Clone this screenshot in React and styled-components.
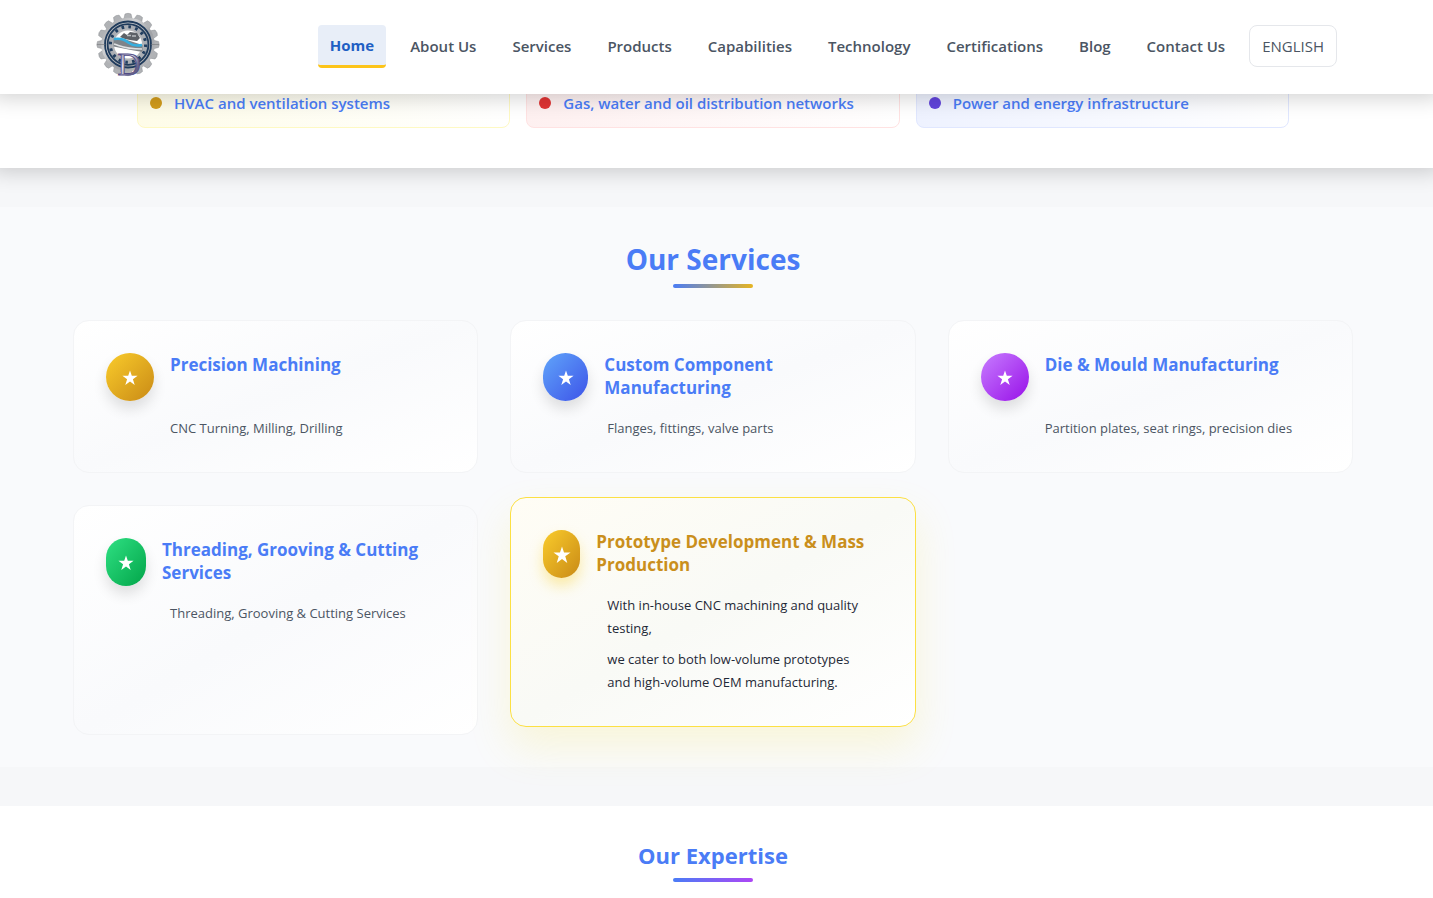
import React from 'react';
import styled, { createGlobalStyle, css } from 'styled-components';

const palette = {
  blue: '#4a7cf6',
  navActive: '#1f5fc4',
  slate: '#4b5563',
  gold: '#ca8f1c',
  line: '#e5e7eb',
};

const GlobalStyle = createGlobalStyle`
  * {
    box-sizing: border-box;
  }

  body {
    margin: 0;
    overflow-x: hidden;
    background: #f6f7f9;
    color: #1f2937;
    font-family: 'Segoe UI', 'Open Sans', 'Noto Sans', sans-serif;
  }

  /* the page scrolls without a visible bar */
  html {
    scrollbar-width: none;
  }

  h2, h3, p, ul {
    margin: 0;
    padding: 0;
  }
`;

const HeaderBlock = styled.header`
  position: sticky;
  top: 0;
  z-index: 10;
  display: flex;
  align-items: center;
  justify-content: space-between;
  height: 94px;
  padding: 0 96px 2px;
  background: #fff;
  box-shadow: 0 -4px 20px 8px rgba(0, 0, 0, 0.18);
`;

const LogoLink = styled.a`
  display: block;
  height: 64px;

  svg {
    overflow: visible;
  }
`;

const Nav = styled.nav`
  display: flex;
  align-items: center;
  gap: 12px;
`;

const NavLink = styled.a`
  padding: 0 12px;
  border-radius: 4px;
  color: ${palette.slate};
  font-size: 15px;
  font-weight: 600;
  line-height: 42px;
  text-decoration: none;
  white-space: nowrap;

  ${props =>
    props.$active &&
    css`
      background: #e8eef8;
      border-bottom: 3px solid #fcc419;
      color: ${palette.navActive};
      font-weight: 700;
      line-height: 40px;
    `}
`;

const LanguageButton = styled.button`
  height: 42px;
  padding: 0 12px;
  border: 1px solid ${palette.line};
  border-radius: 8px;
  background: #fff;
  color: ${palette.slate};
  font-family: inherit;
  font-size: 15px;
`;

const IndustriesBlock = styled.section`
  position: relative;
  margin-top: -17px;
  padding: 0 7px 40px 0;
  background: #fff;
  box-shadow: 0 -4px 20px 8px rgba(0, 0, 0, 0.18);
`;

const IndustryList = styled.ul`
  display: grid;
  grid-template-columns: repeat(3, 1fr);
  gap: 16px;
  max-width: 1152px;
  margin: 0 auto;
  list-style: none;
`;

const IndustryItem = styled.li`
  display: flex;
  align-items: center;
  gap: 12px;
  height: 51px;
  padding: 0 12px;
  border: 1px solid ${props => props.$border};
  border-radius: 8px;
  background: linear-gradient(to right, ${props => props.$tint}, #fff);
  color: ${palette.blue};
  font-size: 15px;
  font-weight: 600;
`;

const Dot = styled.span`
  width: 12px;
  height: 12px;
  border-radius: 50%;
  background: ${props => props.$color};
`;

const ServicesBlock = styled.section`
  margin-top: 39px;
  padding: 32px 39px 32px 32px;
  background: #f9fafc;
`;

const SectionTitle = styled.h2`
  color: ${palette.blue};
  font-size: ${props => (props.$small ? '22px' : '28px')};
  font-weight: 700;
  line-height: ${props => (props.$small ? '34px' : '40px')};
  text-align: center;

  &::after {
    content: '';
    display: block;
    width: 80px;
    height: 4px;
    margin: ${props => (props.$small ? '6px' : '5px')} auto 0;
    border-radius: 2px;
    background: linear-gradient(to right, ${palette.blue}, ${props => props.$accent});
  }
`;

const CardGrid = styled.div`
  display: grid;
  grid-template-columns: repeat(3, 1fr);
  gap: 32px;
  max-width: 1280px;
  margin: 32px auto 0;
`;

const Card = styled.article`
  padding: 32px;
  border: 1px solid #f3f4f6;
  border-radius: 16px;
  background: linear-gradient(to bottom right, #fff, #f9fafc, #fff);

  ${props =>
    props.$featured &&
    css`
      border-color: #fce043;
      background: linear-gradient(to bottom right, #fffdf5, #f9faf6, #fff);
      box-shadow: 0 20px 40px rgba(250, 225, 60, 0.18);
      transform: translateY(-8px);
    `}
`;

const CardHead = styled.div`
  display: flex;
  gap: 16px;
  height: 48px;
  margin-bottom: 16px;
`;

const IconBadge = styled.span`
  display: flex;
  align-items: center;
  justify-content: center;
  flex: none;
  width: ${props => props.$width}px;
  height: 48px;
  padding-top: 2px;
  border-radius: 24px;
  background: linear-gradient(to bottom right, ${props => props.$from}, ${props => props.$to});
  box-shadow: 0 8px 14px ${props => (props.$featured ? 'rgba(250, 204, 21, 0.35)' : 'rgba(0, 0, 0, 0.12)')};
`;

const CardTitle = styled.h3`
  color: ${props => (props.$featured ? palette.gold : palette.blue)};
  font-size: 17px;
  font-weight: 700;
  line-height: 23px;
`;

const CardText = styled.p`
  margin-left: 64px;
  padding-right: 12px;
  color: ${props => (props.$featured ? '#1f2937' : palette.slate)};
  font-size: 13px;
  line-height: 23px;

  & + & {
    margin-top: 8px;
  }
`;

const ExpertiseBlock = styled.section`
  margin-top: 39px;
  padding: 32px 7px 32px 0;
  background: #fff;
`;

const navItems = [
  'Home',
  'About Us',
  'Services',
  'Products',
  'Capabilities',
  'Technology',
  'Certifications',
  'Blog',
  'Contact Us',
];

const industries = [
  { label: 'HVAC and ventilation systems', dot: '#d29c1c', tint: '#fefce8', border: '#fef9c3' },
  { label: 'Gas, water and oil distribution networks', dot: '#e03535', tint: '#fef0f0', border: '#ffe2e2' },
  { label: 'Power and energy infrastructure', dot: '#6144dc', tint: '#eef2ff', border: '#e0e7ff' },
];

const services = [
  { title: 'Precision Machining', text: ['CNC Turning, Milling, Drilling'], from: '#facc2b', to: '#c98a16', width: 48 },
  { title: 'Custom Component Manufacturing', text: ['Flanges, fittings, valve parts'], from: '#60a5fa', to: '#3d53e8', width: 45 },
  { title: 'Die & Mould Manufacturing', text: ['Partition plates, seat rings, precision dies'], from: '#c77dff', to: '#9810e8', width: 48 },
  { title: 'Threading, Grooving & Cutting Services', text: ['Threading, Grooving & Cutting Services'], from: '#2fe083', to: '#02a549', width: 40 },
  {
    title: 'Prototype Development & Mass Production',
    text: [
      'With in-house CNC machining and quality testing,',
      'we cater to both low-volume prototypes and high-volume OEM manufacturing.',
    ],
    from: '#facc2b',
    to: '#c98a16',
    width: 37,
    featured: true,
  },
];

const teeth = Array.from({ length: 16 }, (_, i) => i * 22.5);

const Logo = () => (
  <svg width="64" height="64" viewBox="0 0 64 64" role="img" aria-label="Company logo">
    <defs>
      <linearGradient id="steel" x1="0" y1="0" x2="1" y2="1">
        <stop offset="0" stopColor="#97999d" />
        <stop offset="0.35" stopColor="#cfd0d2" />
        <stop offset="0.6" stopColor="#a0a2a6" />
        <stop offset="1" stopColor="#c0c1c4" />
      </linearGradient>
      <linearGradient id="chrome" x1="0" y1="0" x2="1" y2="1">
        <stop offset="0" stopColor="#5a5788" />
        <stop offset="0.4" stopColor="#e4e4ee" />
        <stop offset="0.7" stopColor="#6d6a8c" />
        <stop offset="1" stopColor="#3a3660" />
      </linearGradient>
    </defs>
    <g fill="#b0b2b5" stroke="#8c8e92" strokeWidth="0.5" strokeLinejoin="round">
      {teeth.map(angle => (
        <path key={angle} d="M27.6 6 L29 0 Q32 -1.4 35 0 L36.4 6 Z" transform={`rotate(${angle} 32 30.5)`} />
      ))}
    </g>
    <circle cx="32" cy="30.5" r="26.8" fill="url(#steel)" />
    <circle cx="32" cy="30.5" r="23" fill="none" stroke="#1f3b5c" strokeWidth="1.8" />
    <circle cx="32" cy="30.5" r="20.4" fill="#a9adb3" stroke="#1f3b5c" strokeWidth="1.8" />
    <circle cx="32" cy="30.5" r="17.6" fill="none" stroke="#233f60" strokeWidth="3.2" strokeDasharray="2.6 4.3" />
    <circle cx="32" cy="30.5" r="16" fill="#b3b5b9" />
    <circle cx="32" cy="30.5" r="14" fill="#fff" />
    <path d="M24 23 L28 19 L31 21 L34 18 L41 19 L44 24 L41 27 L34 26 L29 25 Z" fill="#5d6167" />
    <path d="M31 21.5 h4 M36 22 h4" stroke="#b9bcc0" strokeWidth="1.4" />
    <path d="M17.5 24.5 L31 26 L46.5 31 V38 L35 36 L17.5 32.5 Z" fill="#7f848a" />
    <path d="M18 30 C25 32 28 35 46 35" fill="none" stroke="#dfe1e3" strokeWidth="1.6" />
    <path d="M18 25 C26 24 29 26 33 29 C37 32 41 32 46 31" fill="none" stroke="#36afe0" strokeWidth="2.4" />
    <path d="M1 30.5 H9 M55 30.5 H63" stroke="#737579" strokeWidth="0.6" />
    <text
      x="33"
      y="61"
      textAnchor="middle"
      fontFamily="'Liberation Serif', serif"
      fontSize="32"
      fill="url(#chrome)"
      stroke="#514b85"
      strokeWidth="0.9"
    >
      D
    </text>
  </svg>
);

const Star = ({ size }) => (
  <svg width={size} height={size} viewBox="0 0 16 16" aria-hidden="true">
    <path
      fill="#fff"
      d="M8 0.4 L9.8 5.8 H15.6 L10.9 9.2 L12.7 15 L8 11.5 L3.3 15 L5.1 9.2 L0.4 5.8 H6.2 Z"
    />
  </svg>
);

const ServiceCard = ({ service }) => {
  const { title, text, from, to, width, featured } = service;
  return (
    <Card $featured={featured}>
      <CardHead>
        <IconBadge $from={from} $to={to} $width={width} $featured={featured}>
          <Star size={featured ? 18 : 16} />
        </IconBadge>
        <CardTitle $featured={featured}>{title}</CardTitle>
      </CardHead>
      {text.map(line => (
        <CardText key={line} $featured={featured}>{line}</CardText>
      ))}
    </Card>
  );
};

const App = () => {
  return (
    <>
      <GlobalStyle />
      <HeaderBlock>
        <LogoLink href="#home">
          <Logo />
        </LogoLink>
        <Nav>
          {navItems.map(item => (
            <NavLink
              key={item}
              href={`#${item.toLowerCase().replace(' ', '-')}`}
              $active={item === 'Home'}
            >
              {item}
            </NavLink>
          ))}
          <LanguageButton type="button">ENGLISH</LanguageButton>
        </Nav>
      </HeaderBlock>
      <main>
        <IndustriesBlock>
          <IndustryList>
            {industries.map(({ label, dot, tint, border }) => (
              <IndustryItem key={label} $tint={tint} $border={border}>
                <Dot $color={dot} />
                {label}
              </IndustryItem>
            ))}
          </IndustryList>
        </IndustriesBlock>
        <ServicesBlock id="services">
          <SectionTitle $accent="#e6b422">Our Services</SectionTitle>
          <CardGrid>
            {services.map(service => (
              <ServiceCard service={service} key={service.title} />
            ))}
          </CardGrid>
        </ServicesBlock>
        <ExpertiseBlock>
          <SectionTitle $small $accent="#ad46f5">Our Expertise</SectionTitle>
        </ExpertiseBlock>
      </main>
    </>
  );
};

export default App;
